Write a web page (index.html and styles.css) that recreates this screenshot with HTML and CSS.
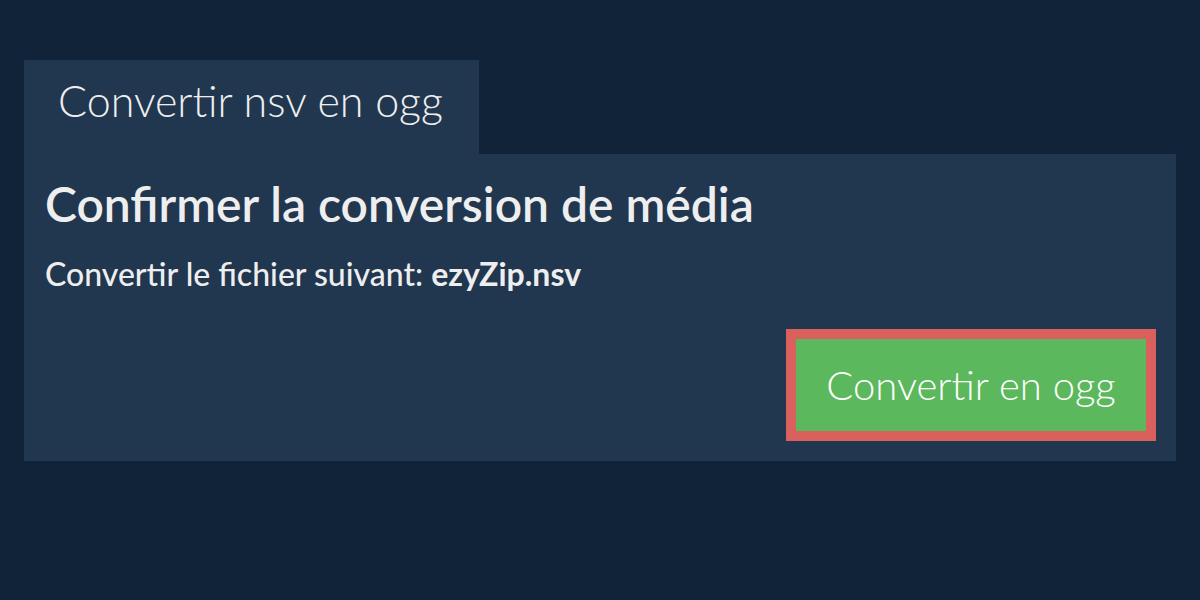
FILE: index.html
```html
<!DOCTYPE html>
<html lang="fr">
<head>
<meta charset="utf-8">
<link rel="stylesheet" href="styles.css">
</head>
<body>
<div class="wrap">
  <div class="tab">Convertir nsv en ogg</div>
  <div class="panel">
    <h1 class="title">Confirmer la conversion de média</h1>
    <p class="sub">Convertir le fichier suivant: <b>ezyZip.nsv</b></p>
    <div class="actions">
      <button class="btn">Convertir en ogg</button>
    </div>
  </div>
</div>
</body>
</html>
```
FILE: styles.css
```css
html, body { margin: 0; padding: 0; }
body {
  background: #112339;
  font-family: Lato, "Open Sans", sans-serif;
  color: #eeeeee;
  width: 1200px;
  height: 600px;
}
.wrap { padding: 60px 24px 0; }
.tab {
  display: inline-block;
  box-sizing: border-box;
  width: 455px;
  height: 94px;
  background: #21364f;
  font-size: 43px;
  font-weight: 300;
  padding: 15px 0 0 34px;
  line-height: 52px;
}
.panel {
  background: #21364f;
  height: 307px;
  box-sizing: border-box;
  padding: 21px 20px 0 21px;
}
.title {
  margin: 0;
  font-size: 48px;
  font-weight: 600;
  line-height: 58px;
}
.sub {
  margin: 22px 0 0;
  font-size: 32px;
  font-weight: 500;
  line-height: 38px;
}
.sub b { font-weight: 700; }
.actions { display: flex; justify-content: flex-end; margin-top: 36px; }
.btn {
  box-sizing: border-box;
  width: 370px;
  height: 112px;
  background: #5cb85c;
  border: 10px solid #d9605d;
  color: #ffffff;
  font-family: Lato, sans-serif;
  font-size: 40px;
  font-weight: 300;
  padding: 0;
}
```
